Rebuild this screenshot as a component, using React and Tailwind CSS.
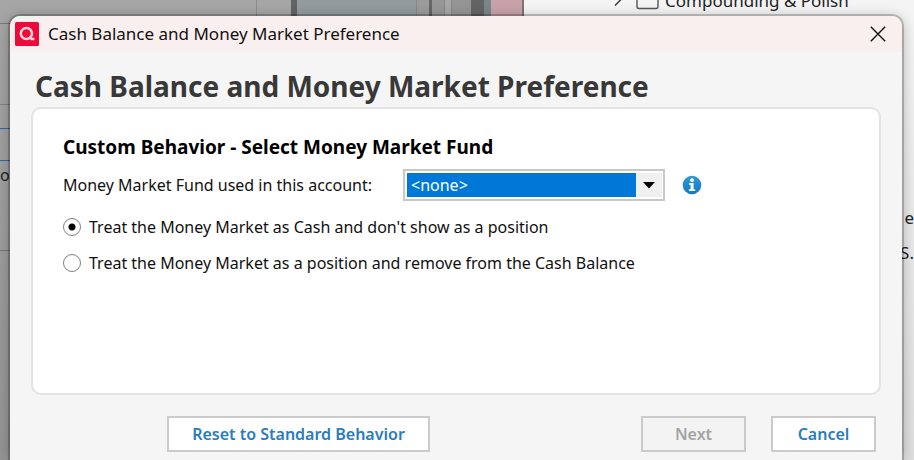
import React from "react";

const AppLogo = () => (
  <svg viewBox="0 0 24 24" className="w-6 h-6 shrink-0" aria-hidden="true">
    <rect width="24" height="24" rx="1.6" fill="#ec0a38" />
    <circle cx="11.4" cy="11.5" r="5.6" fill="none" stroke="#fbd3dc" strokeWidth="2.5" />
    <path d="M14.4 14.6l2.2 2.4h2.8" fill="none" stroke="#fbd3dc" strokeWidth="2.3" />
  </svg>
);

const CloseIcon = () => (
  <svg viewBox="0 0 16 16" className="w-4 h-4" aria-hidden="true">
    <path d="M0.8 0.8l14.4 14.4M15.2 0.8L0.8 15.2" stroke="#111" strokeWidth="1.4" fill="none" />
  </svg>
);

const InfoIcon = () => (
  <svg viewBox="0 0 20 20" className="w-5 h-5" aria-hidden="true">
    <defs>
      <linearGradient id="info" x1="0" y1="0" x2="0" y2="1">
        <stop offset="0" stopColor="#2f9ad8" />
        <stop offset="1" stopColor="#1578be" />
      </linearGradient>
    </defs>
    <circle cx="10" cy="10" r="9.3" fill="url(#info)" />
    <circle cx="10" cy="5.2" r="1.9" fill="#fff" />
    <path d="M7 8h4.6v6.2h1.6v1.7H6.9v-1.7h1.7V9.7H7z" fill="#fff" />
  </svg>
);

// What shows of the windows behind the dialog
const Backdrop = () => (
  <div className="absolute inset-0 flex bg-[#dcdcdc] text-[#222]">
    <div className="relative w-[291px] shrink-0 bg-linear-to-b from-[#a6a6a6] to-[#959595]">
      <div className="absolute top-0 left-[256px] w-px h-4 bg-[#8c8c8c]" />
      <div className="absolute top-[23px] left-0 w-4 h-px bg-[#777]" />
      <div className="absolute top-[104px] left-0 w-4 h-px bg-[#808080]" />
      <div className="absolute top-[128px] left-0 w-4 h-px bg-[#2c6ba0]" />
      <div className="absolute top-[160px] left-0 w-4 h-px bg-[#2c6ba0]" />
      <span className="absolute top-[165px] left-0 text-base leading-5">o</span>
      <div className="absolute top-[250px] left-0 w-4 h-px bg-[#777]" />
    </div>
    <div className="w-[6px] shrink-0 bg-[#646464]" />
    <div className="w-[119px] shrink-0 bg-[#939b9d]" />
    <div className="w-[13px] shrink-0 bg-[#9b9b9b] border-l border-[#888]" />
    <div className="w-[3px] shrink-0 bg-[#666]" />
    <div className="w-[12px] shrink-0 bg-[#979797]" />
    <div className="w-[8px] shrink-0 bg-[#a6a6a6] border-x border-[#888]" />
    <div className="w-[19px] shrink-0 bg-[#959595]" />
    <div className="w-[13px] shrink-0 bg-[#646464]" />
    <div className="w-[7px] shrink-0 bg-[#7b858f]" />
    <div className="w-[31px] shrink-0 bg-[#c9a2a9]" />
    <div className="w-[2px] shrink-0 bg-[#777]" />
    <div className="relative flex-1 bg-linear-to-b from-[#f4f4f4] to-[#dedede] overflow-hidden">
      <svg viewBox="0 0 50 16" className="absolute top-0 left-[88px] w-[50px] h-4" fill="none" aria-hidden="true">
        <path d="M3 5.5l7-7" stroke="#333" strokeWidth="1.4" />
        <path d="M25 -2v8.5q0 2 2 2h17q2 0 2-2V-2" stroke="#555" strokeWidth="1.4" />
      </svg>
      <span className="absolute -top-[11px] left-[141px] text-[17px] leading-6 whitespace-nowrap">
        Compounding &amp; Polish
      </span>
      <span className="absolute top-[206px] right-0 text-[17px] leading-6">e</span>
      <span className="absolute top-[241px] right-0 text-[17px] leading-6">S.</span>
    </div>
  </div>
);

const RadioOption = ({ id, label, defaultChecked }) => (
  <div className="flex items-center h-9 gap-2">
    <input
      type="radio"
      id={id}
      name="treatment"
      defaultChecked={defaultChecked}
      className="appearance-none w-[18px] h-[18px] shrink-0 rounded-full border border-[#808080] bg-white checked:bg-[radial-gradient(circle,#000_0_3px,#fff_4px)]"
    />
    <label htmlFor={id} className="text-base leading-6">
      {label}
    </label>
  </div>
);

const DialogButton = ({ className, children, ...props }) => (
  <button
    type="button"
    className={`h-9 border-2 border-[#cbcbcb] text-base leading-6 font-semibold ${className}`}
    {...props}
  >
    {children}
  </button>
);

const App = () => {
  return (
    <div className="relative h-screen overflow-hidden pt-4 pl-[10px] pr-3 font-['Noto_Sans','Open_Sans',sans-serif]">
      <Backdrop />
      <div
        role="dialog"
        aria-labelledby="window-title"
        className="relative h-full bg-[#f5f5f5] rounded-t-[10px] overflow-hidden ring-2 ring-black/20 shadow-[0_2px_14px_rgba(0,0,0,0.3)]"
      >
        <div className="flex items-center h-9 pl-[5px] pr-4 bg-[#f9efef]">
          <AppLogo />
          <span id="window-title" className="ml-[9px] text-[17px] leading-6 text-[#111]">
            Cash Balance and Money Market Preference
          </span>
          <button type="button" aria-label="Close" className="ml-auto">
            <CloseIcon />
          </button>
        </div>

        <div className="px-[21px] pt-4">
          <h1 className="pl-1 mb-[3px] text-[28px] leading-9 font-bold text-[#383838]">
            Cash Balance and Money Market Preference
          </h1>

          <div className="min-h-[288px] px-[30px] pt-6 bg-white border-2 border-[#e3e3e3] rounded-[10px] text-[#111]">
            <h2 className="mb-2 text-[19px] leading-7 font-bold text-black">
              Custom Behavior - Select Money Market Fund
            </h2>
            <div className="flex items-center">
              <label htmlFor="fund" className="text-base leading-6">
                Money Market Fund used in this account:
              </label>
              <div className="relative ml-[31px] w-[262px] h-8 border-2 border-[#c8c8c8] bg-white p-[2px] flex">
                <select
                  id="fund"
                  className="appearance-none w-full h-full pl-1 mr-[25px] bg-[#0078d7] text-white text-base leading-5 outline-none"
                >
                  <option>&lt;none&gt;</option>
                </select>
                <div className="absolute inset-y-[2px] right-[1px] w-[26px] bg-[#f0f0f0] flex items-center justify-center pointer-events-none">
                  <svg viewBox="0 0 12 7" className="w-3 h-[7px]" aria-hidden="true">
                    <path d="M0 0h12L6 6.5z" fill="#000" />
                  </svg>
                </div>
              </div>
              <button type="button" aria-label="About money market funds" className="ml-[17px]">
                <InfoIcon />
              </button>
            </div>
            <div className="mt-2">
              <RadioOption
                id="as-cash"
                label="Treat the Money Market as Cash and don't show as a position"
                defaultChecked
              />
              <RadioOption
                id="as-position"
                label="Treat the Money Market as a position and remove from the Cash Balance"
              />
            </div>
          </div>

          <div className="flex mt-[21px] pl-[136px] pr-[5px]">
            <DialogButton className="w-[263px] bg-white text-[#2a7cc0]">Reset to Standard Behavior</DialogButton>
            <DialogButton className="w-[105px] ml-auto bg-[#f3f3f3] text-[#a3a3a3]" disabled>
              Next
            </DialogButton>
            <DialogButton className="w-[105px] ml-[25px] bg-white text-[#2a7cc0]">Cancel</DialogButton>
          </div>
        </div>
      </div>
    </div>
  );
};

export default App;
